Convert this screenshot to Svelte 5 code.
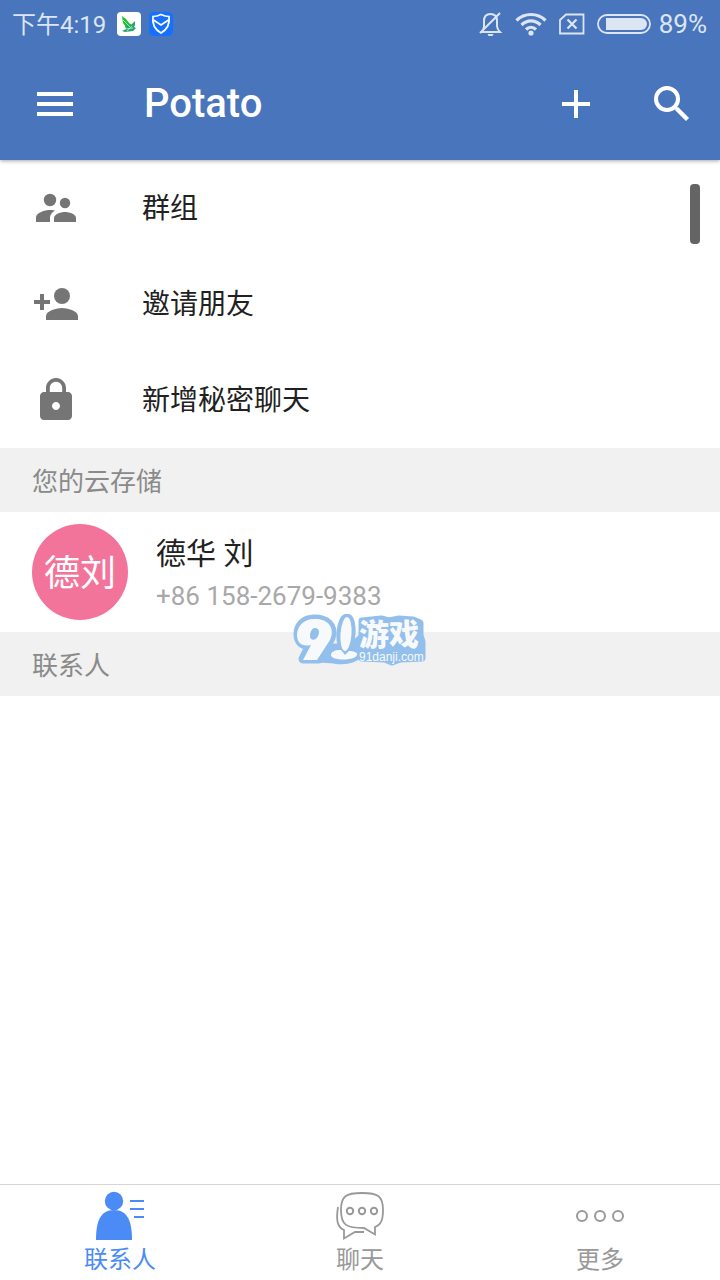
<script>
  const actions = [
    { id: 'groups', label: '群组' },
    { id: 'invite', label: '邀请朋友' },
    { id: 'secret', label: '新增秘密聊天' },
  ];
  const tabs = [
    { id: 'contacts', label: '联系人' },
    { id: 'chats', label: '聊天' },
    { id: 'more', label: '更多' },
  ];
  let active = $state('contacts');
</script>

<div class="screen">
  <header>
    <div class="status">
      <span class="clock">下午4:19</span>
      <svg class="app" width="24" height="24" viewBox="0 0 24 24" aria-hidden="true">
        <rect width="24" height="24" rx="4" fill="#fff" />
        <path d="M5 4l4 3 3 4 3 2 3 4-4-1-5-1-3-4z" fill="#1fc02f" />
        <path d="M8 14l6-1 4-4 0 4-1 2 2 1-3 3-8 1-3-1 4-2z" fill="#22a86a" />
        <path d="M6 8l7 7M8 17l8-1M10 19l5-5" stroke="#fff" stroke-width=".6" />
      </svg>
      <svg class="app" width="24" height="24" viewBox="0 0 24 24" aria-hidden="true">
        <rect width="24" height="24" rx="5" fill="#1670ff" />
        <path d="M12 2.500c3 1.500 5 2 8 2 1 7-2 13-8 16.500C6 17.500 3 11.500 4 4.500c3 0 5-.5 8-2z" fill="none" stroke="#fff" stroke-width="1.700" />
        <path d="M4.500 8l7.500 5 7.500-5" fill="none" stroke="#fff" stroke-width="1.800" />
      </svg>
      <span class="spacer"></span>
      <svg width="24" height="26" viewBox="0 0 24 26" fill="none" stroke="#dce5f4" stroke-width="2" aria-hidden="true">
        <path d="M3 21h18c-2-2-3-3-3-6V10c0-4-2-7-6.500-7S5 6 5 10v5c0 3-1 4-2 6zM1 22L21 2" />
        <path d="M8.500 23h6l-1 2h-4z" fill="#dce5f4" stroke="none" />
      </svg>
      <svg class="wifi" width="32" height="24" viewBox="0 0 32 24" fill="none" stroke="#dce5f4" stroke-width="3.200" aria-hidden="true">
        <path d="M1.500 8.500c8-8 21-8 29 0M6.500 13c5.500-5.500 13.500-5.500 19 0M11 17.500c3-3 7-3 10 0" />
        <circle cx="16" cy="21" r="2.600" fill="#dce5f4" stroke="none" />
      </svg>
      <svg class="sim" width="26" height="22" viewBox="0 0 26 22" fill="none" stroke="#dce5f4" stroke-width="1.800" aria-hidden="true">
        <path d="M7 1.500h17.500v19h-23.500V7z" />
        <path d="M8.500 6.500l9 9m0-9l-9 9" stroke-width="2.200" />
      </svg>
      <svg class="battery" width="54" height="20" viewBox="0 0 54 20" aria-hidden="true">
        <rect x="1" y="1" width="52" height="18" rx="9" fill="none" stroke="#dce5f4" stroke-width="1.800" />
        <path d="M9 4h35a6 6 0 0 1 0 12H9z" fill="#dce5f4" />
      </svg>
      <span class="percent">89%</span>
    </div>
    <div class="bar">
      <button class="icon" aria-label="菜单">
        <svg width="38" height="24" viewBox="0 0 38 24" fill="#fff"><path d="M0 0h36v4H0zM0 10h36v4H0zM0 20h36v4H0z" /></svg>
      </button>
      <h1>Potato</h1>
      <button class="icon" aria-label="添加">
        <svg width="28" height="28" viewBox="0 0 28 28" fill="#fff"><path d="M12 0h4v12h12v4H16v12h-4V16H0v-4h12z" /></svg>
      </button>
      <button class="icon" aria-label="搜索">
        <svg width="36" height="36" viewBox="0 0 36 36" fill="none" stroke="#fff" stroke-width="4"><circle cx="13" cy="13" r="11" /><path d="M22.500 22.500l11 11" stroke-width="4.400" /><path d="M20 20l4 4" stroke-width="2.500" /></svg>
      </button>
    </div>
  </header>

  <main>
    <ul class="actions">
      {#each actions as a (a.id)}
        <li>
          <button class="action">
            <svg width="48" height="48" viewBox="0 0 48 48" fill="#757575" aria-hidden="true">
              {#if a.id === 'groups'}
                <circle cx="18" cy="16" r="6.200" />
                <circle cx="33" cy="19" r="5.200" />
                <path d="M33 28c-4 0-11 2-11 6v4h22v-4c0-4-7-6-11-6z" />
                <path d="M18 26c-5 0-14 2.500-14 7.500V38h14v-4c0-2 .8-5 5-7.500-2-.4-3.500-.5-5-.5z" />
              {:else if a.id === 'invite'}
                <circle cx="30" cy="16" r="8" />
                <path d="M12 20v-6H8v6H2v4h6v6h4v-6h6v-4zM30 28c-5 0-16 2.700-16 8v4h32v-4c0-5.300-11-8-16-8z" />
              {:else}
                <path d="M36 16h-2v-4C34 6.500 29.500 2 24 2S14 6.500 14 12v4h-2c-2.200 0-4 1.800-4 4v20c0 2.200 1.800 4 4 4h24c2.200 0 4-1.800 4-4V20c0-2.200-1.800-4-4-4zM24 34c-2.200 0-4-1.800-4-4s1.800-4 4-4 4 1.800 4 4-1.800 4-4 4zm6.200-18H17.800v-4c0-3.400 2.800-6.200 6.200-6.200s6.200 2.800 6.200 6.200z" />
              {/if}
            </svg>
            <span>{a.label}</span>
          </button>
        </li>
      {/each}
    </ul>
    <h2>您的云存储</h2>
    <button class="contact">
      <span class="avatar">德刘</span>
      <span class="who">
        <span class="name">德华 刘</span>
        <span class="phone">+86 158-2679-9383</span>
      </span>
    </button>
    <div class="marked">
      <h2>联系人</h2>
      <svg class="mark" width="136" height="56" viewBox="0 0 136 56" aria-label="91游戏">
        <g stroke="#92bfeb" stroke-width="9" fill="#92bfeb" stroke-linejoin="round">
          <path d="M22 5C11 5 6 13 6 20c0 8 5 12 12 11L11 45h16l12-21C43 11 34 5 22 5z" />
          <ellipse cx="54" cy="19" rx="5" ry="15" transform="rotate(4 54 19)" />
          <path d="M28 44l14-10h18l8-8v14l-8 4q-8 3-18 1z" />
          <path d="M70 7l10-1 9-1 8 2 10-2 14 1 7 3v12l2 7v16l-22 1-8 3-7-3-23-1z" stroke-width="7" />
        </g>
        <path fill-rule="evenodd" fill="#f8f9fa" d="M22 5C11 5 5 13 5 21c0 8 5 12 14 10L11 46h14l13-20C44 13 35 4 22 5zM23 14c4 0 5 4 3 8-2 5-8 5-8 0 0-4 2-8 5-8z" />
        <ellipse cx="54" cy="20" rx="5.500" ry="17" fill="#f8f9fa" transform="rotate(4 54 20)" />
        <path d="M49 36c-7 0-10 2-10 5 0 6 24 6 26 0 1-3-4-4-8-4l-4 4z" fill="#f8f9fa" />
        <text class="mark-name" x="67" y="31">游戏</text>
        <text class="mark-url" x="67" y="47">91danji.com</text>
      </svg>
    </div>
    <span class="thumb"></span>
  </main>

  <nav>
    {#each tabs as t (t.id)}
      <button class="tab" class:active={active === t.id} onclick={() => (active = t.id)}>
        <svg width="50" height="50" viewBox="0 0 50 50" fill="none" stroke="currentColor" stroke-width="2" aria-hidden="true">
          {#if t.id === 'contacts'}
            <g fill="currentColor" stroke="none">
              <circle cx="19" cy="10" r="9.200" />
              <path d="M1 49C1 31 5 19 19 19s18 12 18 30z" />
            </g>
            <path d="M35 10h14M35 18h14M39 26h10" />
          {:else if t.id === 'chats'}
            <path stroke-width="1.800" d="M27 2C11 2 6 5 6 19c0 15 5 18 23 18l11 6.500V36c6-2 8-7 8-17C48 5 43 2 27 2z" />
            <path stroke-width="1.800" d="M3 16C1 29 2 36 9 39v8.500L20 41h9" />
            <circle cx="15" cy="20" r="3.200" />
            <circle cx="27" cy="20" r="3.200" />
            <circle cx="39" cy="20" r="3.200" />
          {:else}
            <circle cx="7" cy="25" r="5" />
            <circle cx="25" cy="25" r="5" />
            <circle cx="43" cy="25" r="5" />
          {/if}
        </svg>
        <span>{t.label}</span>
      </button>
    {/each}
  </nav>
</div>

<style>
  :global(body) { margin: 0; }
  .screen {
    display: flex;
    flex-direction: column;
    min-height: 100vh;
    background: #fff;
    color: #212121;
    font-family: Roboto, "Noto Sans CJK SC", sans-serif;
  }
  button {
    border: 0;
    padding: 0;
    background: none;
    color: inherit;
    font: inherit;
    text-align: left;
    cursor: pointer;
  }
  svg { display: block; flex: none; }
  h1, h2, ul { margin: 0; padding: 0; font-weight: 400; }
  header {
    position: relative;
    background: #4975bc;
    box-shadow: 0 1px 4px rgba(0, 0, 0, 0.35);
  }
  .status {
    display: flex;
    align-items: center;
    height: 48px;
    padding: 0 13px 0 12px;
    color: #dce5f4;
    font-size: 24px;
    line-height: 48px;
  }
  .clock { margin-right: 3px; padding-top: 2px; }
  .app { margin-left: 8px; }
  .spacer { flex: 1; }
  .wifi, .sim, .battery { margin-left: 12px; }
  .percent { margin-left: 8px; font-size: 26px; }
  .bar {
    display: flex;
    align-items: center;
    height: 112px;
    padding: 0 8px 0 16px;
  }
  .icon {
    display: grid;
    place-items: center;
    width: 80px;
    height: 80px;
  }
  .icon + .icon { margin-left: 16px; }
  h1 {
    flex: 1;
    padding-left: 48px;
    color: #fff;
    font-size: 40px;
    font-weight: 500;
    line-height: 48px;
  }
  main { position: relative; flex: 1; }
  ul { list-style: none; }
  .action {
    display: flex;
    align-items: center;
    gap: 62px;
    width: 100%;
    height: 96px;
    padding: 0 32px;
    font-size: 28px;
    line-height: 40px;
  }
  .action span { padding-top: 2px; }
  h2 {
    padding: 4px 32px 0;
    background: #f1f1f1;
    color: #8a8a8a;
    font-size: 26px;
    line-height: 60px;
  }
  .contact {
    display: flex;
    align-items: center;
    gap: 28px;
    width: 100%;
    height: 120px;
    padding: 0 32px;
  }
  .avatar {
    flex: none;
    width: 96px;
    padding-top: 4px;
    border-radius: 50%;
    background: #f3749a;
    color: #fff;
    font-size: 36px;
    line-height: 92px;
    text-align: center;
  }
  .who { display: flex; flex-direction: column; padding-top: 4px; }
  .name { font-size: 30px; line-height: 44px; }
  .phone { color: #a8a8a8; font-size: 26px; line-height: 40px; }
  .marked { position: relative; }
  .mark {
    position: absolute;
    top: -18px;
    left: 50%;
    transform: translateX(-50%);
  }
  .mark-name {
    fill: #f8f9fa;
    font-size: 30px;
    font-weight: 900;
  }
  .mark-url {
    fill: #f8f9fa;
    font-family: "Liberation Sans", sans-serif;
    font-size: 12px;
  }
  .thumb {
    position: absolute;
    top: 24px;
    right: 20px;
    width: 10px;
    height: 60px;
    border-radius: 4px;
    background: #646464;
  }
  nav {
    display: flex;
    height: 95px;
    border-top: 1px solid #d5d5d5;
  }
  .tab {
    flex: 1;
    display: flex;
    flex-direction: column;
    align-items: center;
    padding-top: 6px;
    color: #999;
    font-size: 24px;
    line-height: 38px;
  }
  .active { color: #4a8bf5; }
</style>
